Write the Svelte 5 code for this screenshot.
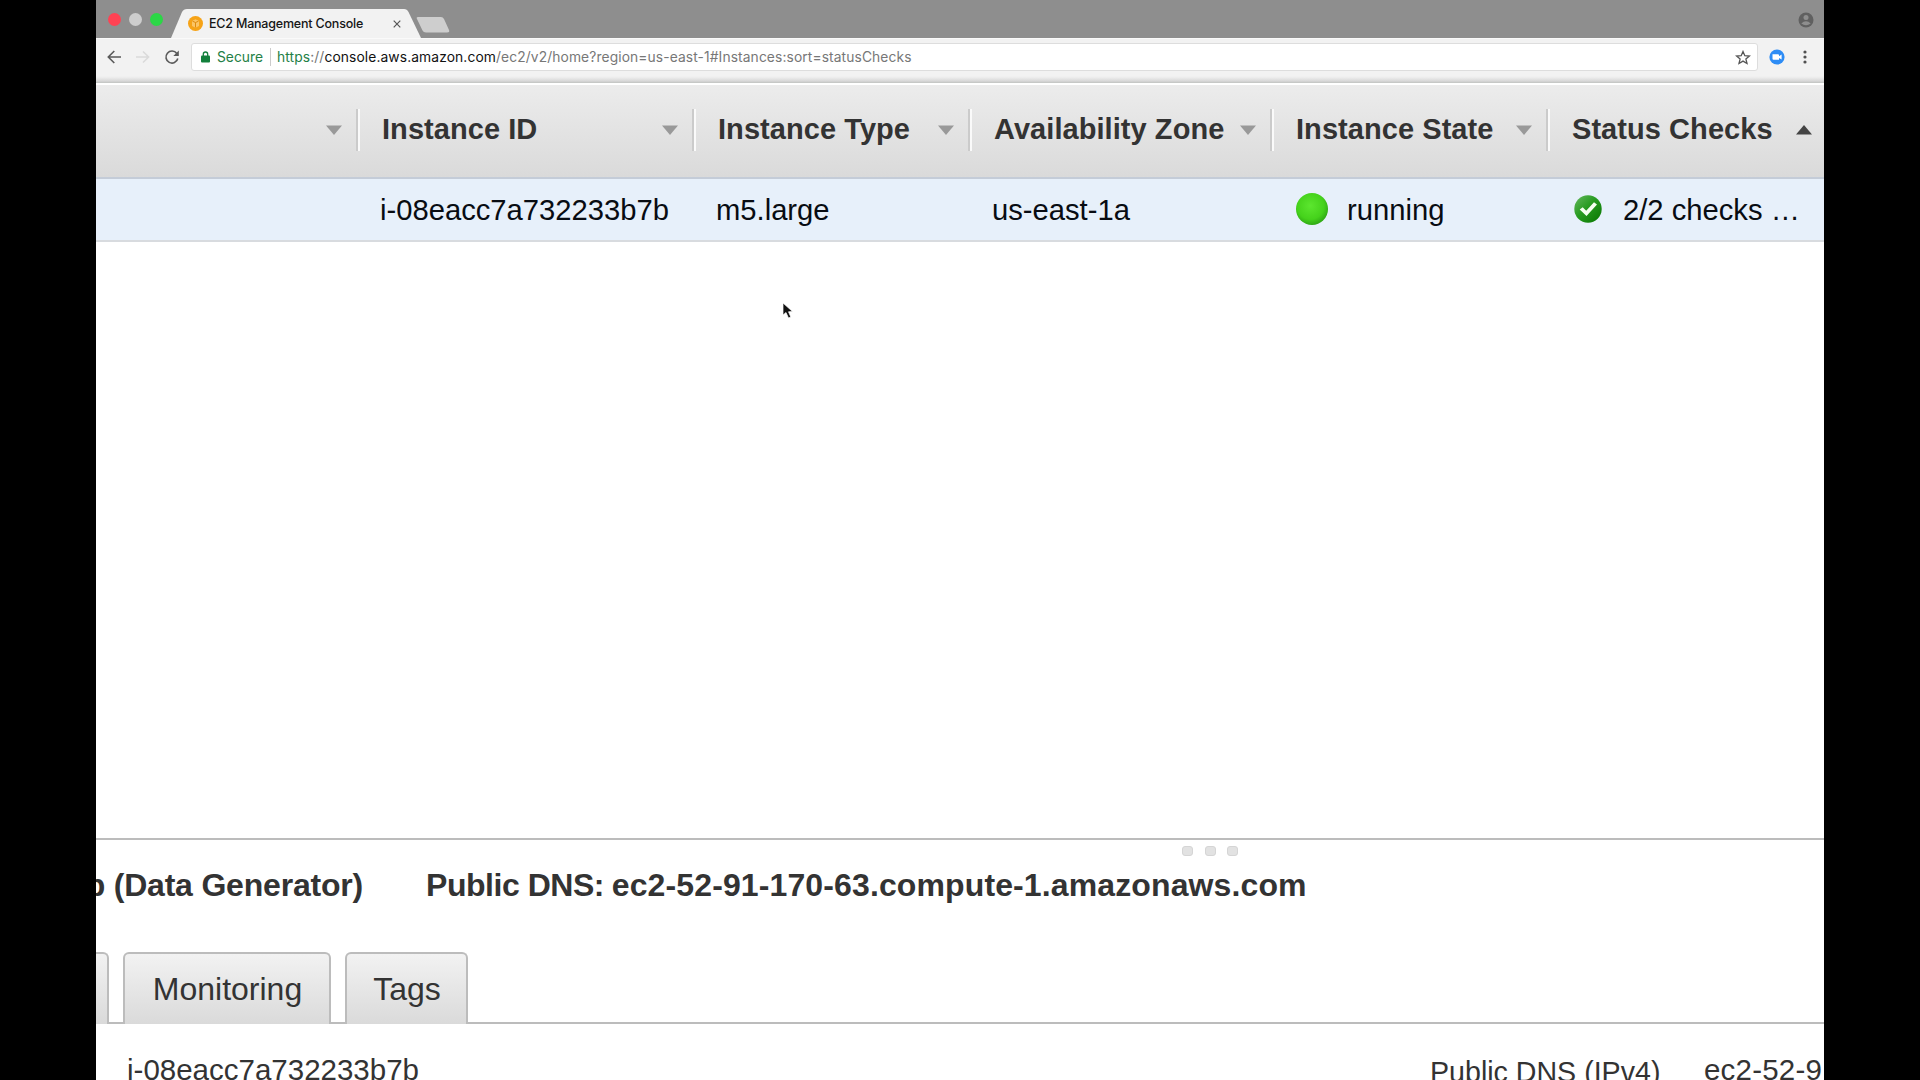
<script>
  const columns = [
    { label: '', value: '', width: 264, sort: 'down' },
    { label: 'Instance ID', value: 'i-08eacc7a732233b7b', width: 336, sort: 'down' },
    { label: 'Instance Type', value: 'm5.large', width: 276, sort: 'down' },
    { label: 'Availability Zone', value: 'us-east-1a', width: 302, sort: 'down' },
    { label: 'Instance State', value: 'running', width: 276, sort: 'down', icon: 'running' },
    { label: 'Status Checks', value: '2/2 checks …', width: 274, sort: 'up', icon: 'ok' }
  ];
</script>

<div class="screen">
  <main class="window">
    <div class="tabstrip">
      <div class="lights"><i class="red"></i><i class="idle"></i><i class="green"></i></div>
      <div class="browser-tab">
        <svg class="shape" viewBox="0 0 250 29" aria-hidden="true"><path d="M0 29 L11 3 Q12.500 0 16 0 H233 Q236 0 237.500 3 L250 29 Z" fill="#f2f2f2" /></svg>
        <svg class="favicon" width="15" height="15" viewBox="0 0 15 15"><circle cx="7.500" cy="7.500" r="7.500" fill="#f6a317" /><path d="M4 5 L7.500 3.300 L11 5 V10 L7.500 11.800 L4 10 Z" fill="#fbc566" /><path d="M7.500 6.500 V11.500 M4.500 5.200 L7.500 6.500 L10.500 5.200" stroke="#df8b0c" fill="none" /></svg>
        <span class="title">EC2 Management Console</span>
        <svg class="close" width="8" height="8" viewBox="0 0 8 8"><path d="M.7 .7 L7.300 7.300 M7.300 .7 L.7 7.300" stroke="#555" stroke-width="1.200" /></svg>
      </div>
      <svg class="newtab" width="34" height="16" viewBox="0 0 34 16"><path d="M2 0 H25 Q27 0 28 2 L33 13 Q34 15.500 31 15.500 H10 Q7.500 15.500 6.500 13.500 L1 2 Q0 0 2 0Z" fill="#cecece" /></svg>
      <svg class="profile" width="16" height="16" viewBox="0 0 16 16"><circle cx="8" cy="8" r="7.500" fill="#606060" /><circle cx="8" cy="5.600" r="2.500" fill="#8e8e8e" /><path d="M3.300 11.500 Q8 6.800 12.700 11.500 Q8 15 3.300 11.500Z" fill="#8e8e8e" /></svg>
    </div>

    <div class="toolbar">
      <svg class="nav" width="88" height="18" viewBox="0 0 88 18" fill="none" stroke-width="1.600">
        <path d="M15 9 H2.500 M8.300 3 L2.300 9 L8.300 15" stroke="#5a5a5a" />
        <path d="M30 9 H42.500 M37 3.500 L42.600 9 L37 14.500" stroke="#dadada" />
        <path d="M70.800 5.500 A6 6 0 1 0 71.800 10.500" stroke="#5a5a5a" />
        <path d="M72.800 2.500 V8 H67.300 Z" fill="#5a5a5a" />
      </svg>
      <div class="address">
        <svg class="lock" width="9" height="12" viewBox="0 0 9 12"><path d="M2.300 5 V3.200 A2.200 2.200 0 0 1 6.700 3.200 V5" fill="none" stroke="#12803c" stroke-width="1.300" /><rect y="4.500" width="9" height="7" rx="1" fill="#12803c" /></svg>
        <span class="secure">Secure</span>
        <span class="url"><span class="scheme">https</span>://<span class="host">console.aws.amazon.com</span><span class="path">/ec2/v2/home?region=us-east-1#Instances:sort=statusChecks</span></span>
        <svg class="star" width="16" height="15" viewBox="0 0 16 15"><path d="M8 1.500 L9.800 5.700 L14.400 6.100 L10.900 9.100 L12 13.500 L8 11.100 L4 13.500 L5.100 9.100 L1.600 6.100 L6.200 5.700Z" fill="none" stroke="#555" stroke-width="1.300" /></svg>
      </div>
      <svg class="extension" width="16" height="16" viewBox="0 0 16 16"><circle cx="8" cy="8" r="7.600" fill="#2d8cf5" /><path d="M3.500 5.300 H9 Q10 5.300 10 6.300 V7.200 L12.600 5.500 V10.600 L10 9 V10.800 H4.500 Q3.500 10.800 3.500 9.800Z" fill="#fff" /></svg>
      <svg class="menu" width="4" height="14" viewBox="0 0 4 14" fill="#505050"><circle cx="2" cy="2" r="1.600" /><circle cx="2" cy="7" r="1.600" /><circle cx="2" cy="12" r="1.600" /></svg>
    </div>
    <div class="edge"></div>

    <section class="instances">
      <div class="row head">
        {#each columns as col, i}
          <div class="cell" class:last={i === columns.length - 1} style:width="{col.width}px">
            <span class="label">{col.label}</span>
            <svg class="sort {col.sort}" width="18" height="10" viewBox="0 0 18 10"><path d={col.sort === 'up' ? 'M1 9.500 L9 0 L17 9.500Z' : 'M1 .5 H17 L9 10Z'} /></svg>
          </div>
        {/each}
      </div>
      <div class="row data">
        {#each columns as col}
          <div class="cell" style:width="{col.width}px">
            {#if col.icon === 'running'}
              <svg class="status" width="34" height="34" viewBox="0 0 34 34"><defs><radialGradient id="ball" cx=".45" cy=".4" r=".6"><stop offset="0" stop-color="#5ce62f" /><stop offset=".7" stop-color="#45d21b" /><stop offset="1" stop-color="#2fa914" /></radialGradient></defs><circle cx="17" cy="16" r="16" fill="url(#ball)" /></svg>
            {:else if col.icon === 'ok'}
              <svg class="status check" width="28" height="28" viewBox="0 0 28 28"><defs><linearGradient id="badge" x1="0" y1="0" x2="1" y2="1"><stop offset="0" stop-color="#66b85f" /><stop offset=".45" stop-color="#279b20" /><stop offset="1" stop-color="#087500" /></linearGradient></defs><circle cx="14" cy="14" r="13.700" fill="url(#badge)" /><path d="M5.700 14.500 L8.700 12.200 L12.200 15.700 L20 7.200 L23 9.500 L12.500 21Z" fill="#f5fff0" /></svg>
            {/if}
            <span>{col.value}</span>
          </div>
        {/each}
      </div>
      <svg class="pointer" width="12" height="18" viewBox="0 0 12 18"><path d="M1 1 V13 L4 10.500 L6.500 16 L8.800 15 L6.500 9.800 L10.500 9.500Z" fill="#111" stroke="#fff" stroke-width=".7" /></svg>
    </section>

    <section class="details">
      <div class="grip"><i></i><i></i><i></i></div>
      <div class="heading"><span class="name">b (Data Generator)</span><span class="dns"><span class="dns-key">Public DNS:</span> ec2-52-91-170-63.compute-1.amazonaws.com</span></div>
      <div class="tabs">
        <div class="tab cut"></div>
        <div class="tab monitoring">Monitoring</div>
        <div class="tab tags">Tags</div>
      </div>
      <div class="fields"><span class="id">i-08eacc7a732233b7b</span><span class="key">Public DNS (IPv4)</span><span class="val">ec2-52-9</span></div>
    </section>
  </main>
</div>

<style>
  :global(body) { margin: 0; background: #000; }
  .screen { box-sizing: border-box; width: 1920px; height: 1080px; padding: 0 96px; overflow: hidden; background: #000; }
  .window { display: flex; flex-direction: column; width: 1728px; height: 1080px; overflow: hidden; background: #fff; font-family: 'Liberation Sans', Arial, sans-serif; color: #333; white-space: nowrap; }
  svg { display: block; flex: none; }

  .tabstrip { display: flex; height: 38px; flex: none; background: #8e8e8e; font: 12.5px Inter, Roboto, sans-serif; }
  .lights { display: flex; gap: 8px; padding: 13px 0 0 12px; width: 63px; flex: none; }
  .lights i { width: 13px; height: 13px; border-radius: 50%; }
  .red { background: #ff4253; }
  .idle { background: #cdcdcd; }
  .green { background: #2bd746; }
  .browser-tab { position: relative; display: flex; align-items: center; box-sizing: border-box; width: 250px; height: 29px; margin-top: 9px; padding-left: 17px; flex: none; }
  .shape { position: absolute; left: 0; top: 0; width: 250px; height: 29px; }
  .favicon, .title, .close { position: relative; }
  .title { width: 174px; margin-left: 6px; margin-right: 10px; color: #161616; letter-spacing: -0.2px; font-weight: 500; }
  .newtab { margin: 17px 0 0 -5px; }
  .profile { margin: 12px 10px 0 auto; }

  .toolbar { display: flex; align-items: center; height: 38px; flex: none; background: #f2f2f2; border-top: 1px solid #fafafa; box-sizing: border-box; padding-bottom: 1px; }
  .nav { margin-left: 10px; margin-right: -3px; }
  .address { display: flex; align-items: center; box-sizing: border-box; width: 1567px; height: 28px; padding-left: 9px; border: 1px solid #ddd; border-radius: 3px; background: #fff; font: 13.8px Inter, Roboto, sans-serif; color: #777; }
  .secure { width: 53px; margin-left: 7px; color: #238046; border-right: 1px solid #ccc; line-height: 18px; }
  .url { margin-left: 6px; letter-spacing: 0.11px; }
  .scheme { color: #238046; }
  .host { color: #111; }
  .star { margin: 0 6px 0 auto; }
  .extension { margin-left: 11px; }
  .menu { margin-left: 18px; }
  .edge { height: 9px; flex: none; background: linear-gradient(#f0f0f0 0 10%, #d5d5d5 60%, #c6c8c6 65% 78%, #fff 80%); }

  .instances { position: relative; height: 753px; flex: none; font-size: 29px; line-height: 34px; }
  .row { display: flex; box-sizing: border-box; }
  .cell { display: flex; align-items: center; box-sizing: border-box; flex: none; padding-left: 22px; }
  .head { height: 94px; padding-top: 24px; background: linear-gradient(#ececec, #dadada); border-bottom: 2px solid #c4ccd8; font-weight: bold; }
  .head .cell { height: 42px; border-right: 2px solid #fafafa; box-shadow: inset -2px 0 #cbcbcb; padding-right: 15px; padding-bottom: 1px; justify-content: space-between; }
  .head .last { border: 0; box-shadow: none; padding-right: 11px; }
  .label { padding-bottom: 2px; letter-spacing: 0.06px; }
  .sort { fill: #999; }
  .sort.up { fill: #444; }
  .data { height: 63px; background: #e7f0fa; border-bottom: 2px solid #d8dbdf; color: #080c12; font-size: 29.200px; }
  .data .cell { padding-left: 20px; }
  .status { margin-left: 1px; margin-right: 18px; }
  .check { margin-left: 4px; margin-right: 21px; margin-bottom: 1px; }
  .pointer { position: absolute; left: 686px; top: 217px; }

  .details { flex: 1; border-top: 2px solid #bcbcbc; box-sizing: border-box; }
  .grip { display: flex; gap: 11.500px; height: 17px; padding: 6px 0 0 1086px; box-sizing: border-box; }
  .grip i { width: 9px; height: 8px; border: 1px solid #d5d5d5; border-radius: 3px; background: #e2e2e2; }
  .heading { display: flex; font-size: 32px; font-weight: bold; line-height: 38px; height: 95px; padding-top: 9px; box-sizing: border-box; }
  .name { display: flex; justify-content: flex-end; width: 267px; letter-spacing: -0.2px; }
  .dns { margin-left: 63px; letter-spacing: 0.12px; word-spacing: -1.300px; }
  .dns-key { letter-spacing: -0.46px; word-spacing: 0; }
  .tabs { display: flex; height: 72px; font-size: 32px; background: linear-gradient(#bcbcbc, #bcbcbc) bottom / 100% 2px no-repeat; }
  .tab { box-sizing: border-box; border: 2px solid #bcbcbc; border-bottom: 0; border-radius: 6px 6px 0 0; background: linear-gradient(#f2f2f2, #dadada); line-height: 70px; padding-left: 1px; text-align: center; }
  .cut { width: 13px; border-left: 0; border-radius: 0 6px 0 0; }
  .monitoring { width: 208px; margin-left: 14px; }
  .tags { width: 123px; margin-left: 14px; }
  .fields { display: flex; font-size: 29.500px; line-height: 34px; padding-top: 29px; }
  .id { width: 1303px; padding-left: 31px; box-sizing: border-box; margin-right: 31px; flex: none; }
  .key { width: 274px; font-size: 28.600px; padding-top: 2px; flex: none; }
  .val { letter-spacing: 0.2px; }
</style>
